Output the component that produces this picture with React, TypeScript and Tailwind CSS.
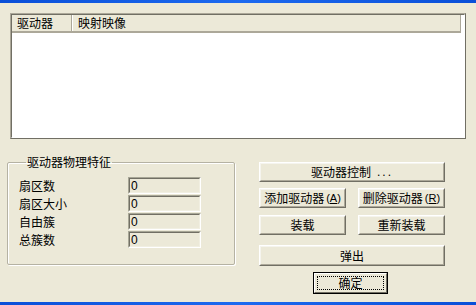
import React from "react";

const cjk = { fontFamily: '"Noto Sans CJK SC", "Noto Sans", sans-serif' };

function XPButton({
  children,
  className = "",
  isDefault = false,
}: {
  children: React.ReactNode;
  className?: string;
  isDefault?: boolean;
}) {
  if (isDefault) {
    return (
      <div className={`border border-black bg-[#ECE9D8] ${className}`}>
        <div className="h-full border border-t-white border-l-white border-r-[#716F64] border-b-[#716F64] p-[2px]">
          <div className="flex h-full items-center justify-center border border-dotted border-black text-[12px] leading-none text-black">
            {children}
          </div>
        </div>
      </div>
    );
  }
  return (
    <div
      className={`border border-t-white border-l-white border-r-[#716F64] border-b-[#716F64] bg-[#ECE9D8] ${className}`}
    >
      <div className="flex h-full items-center justify-center border border-t-[#F5F4EE] border-l-[#F5F4EE] border-r-[#ACA899] border-b-[#ACA899] text-[12px] leading-none text-black">
        {children}
      </div>
    </div>
  );
}

function Field() {
  return (
    <div className="h-[17px] w-[73px] border border-t-[#A7A696] border-l-[#A7A696] border-r-white border-b-white">
      <div className="flex h-full items-center border border-t-[#716F64] border-l-[#716F64] border-r-[#F1EFE2] border-b-[#F1EFE2] bg-[#ECE9D8] pl-[1px] text-[12px] leading-none text-black">
        <span style={{ fontFamily: '"Liberation Sans", sans-serif' }}>0</span>
      </div>
    </div>
  );
}

export default function App() {
  const rows = ["扇区数", "扇区大小", "自由簇", "总簇数"];
  return (
    <div
      className="flex h-[305px] w-[476px] flex-col overflow-hidden bg-[#ECE9D8] text-black"
      style={cjk}
    >
      <div className="h-[3px] bg-gradient-to-r from-[#0A4FD8] via-[#1D6AF0] to-[#0A4FD8]" />

      {/* List view */}
      <div className="ml-[10px] mt-[10px] h-[126px] w-[456px] border border-t-[#ACA899] border-l-[#ACA899] border-r-[#716F64] border-b-[#716F64]">
        <div className="flex h-full flex-col border border-t-[#716F64] border-l-[#716F64] border-r-white border-b-white bg-white">
          <div className="mr-[3px] flex h-[18px] border-b-2 border-b-[#ACA899] border-r border-r-[#ACA899] bg-[#ECE9D8] text-[12px] leading-none">
            <div className="flex w-[60px] items-center border-r border-r-[#ACA899] pl-[5px] shadow-[1px_0_0_#fff]">
              驱动器
            </div>
            <div className="flex items-center pl-[6px]">映射映像</div>
          </div>
          <div className="flex-1" />
        </div>
      </div>

      {/* Bottom section */}
      <div className="flex flex-1 items-start">
        <fieldset className="ml-[7px] mt-[16px] w-[228px] rounded-[2px] border border-[#B5B2A3] pb-[16px] pl-[11px] shadow-[inset_1px_1px_0_#fff,1px_1px_0_#fff]">
          <legend className="ml-[7px] px-[1px] text-[12px] leading-[14px]">
            驱动器物理特征
          </legend>
          <div className="flex flex-col gap-[1px] pt-[8px]">
            {rows.map((r) => (
              <div key={r} className="flex items-center">
                <div className="w-[109px] text-[12px] leading-[17px]">{r}</div>
                <Field />
              </div>
            ))}
          </div>
        </fieldset>

        <div className="ml-[24px] mt-[23px] flex w-[186px] flex-col">
          <XPButton className="h-[20px] w-[186px]">
            <span>驱动器控制</span>
            <span className="ml-[6px] tracking-[2px]" style={{ fontFamily: '"Liberation Sans", sans-serif' }}>
              ...
            </span>
          </XPButton>
          <div className="mt-[6px] flex justify-between">
            <XPButton className="h-[20px] w-[87px]">
              <span>添加驱动器</span>
              <span className="ml-[2px] text-[11px]" style={{ fontFamily: '"Liberation Sans", sans-serif' }}>
                (<u>A</u>)
              </span>
            </XPButton>
            <XPButton className="h-[20px] w-[87px]">
              <span>删除驱动器</span>
              <span className="ml-[2px] text-[11px]" style={{ fontFamily: '"Liberation Sans", sans-serif' }}>
                (<u>R</u>)
              </span>
            </XPButton>
          </div>
          <div className="mt-[7px] flex justify-between">
            <XPButton className="h-[20px] w-[87px]">装载</XPButton>
            <XPButton className="h-[20px] w-[87px]">重新装载</XPButton>
          </div>
          <XPButton className="mt-[10px] h-[21px] w-[186px]">弹出</XPButton>
          <div className="mt-[6px] flex">
            <XPButton isDefault className="ml-[54px] h-[22px] w-[75px]">
              确定
            </XPButton>
          </div>
        </div>
      </div>

      <div className="h-[3px] bg-gradient-to-r from-[#0A4FD8] via-[#1D6AF0] to-[#0A4FD8]" />
    </div>
  );
}
